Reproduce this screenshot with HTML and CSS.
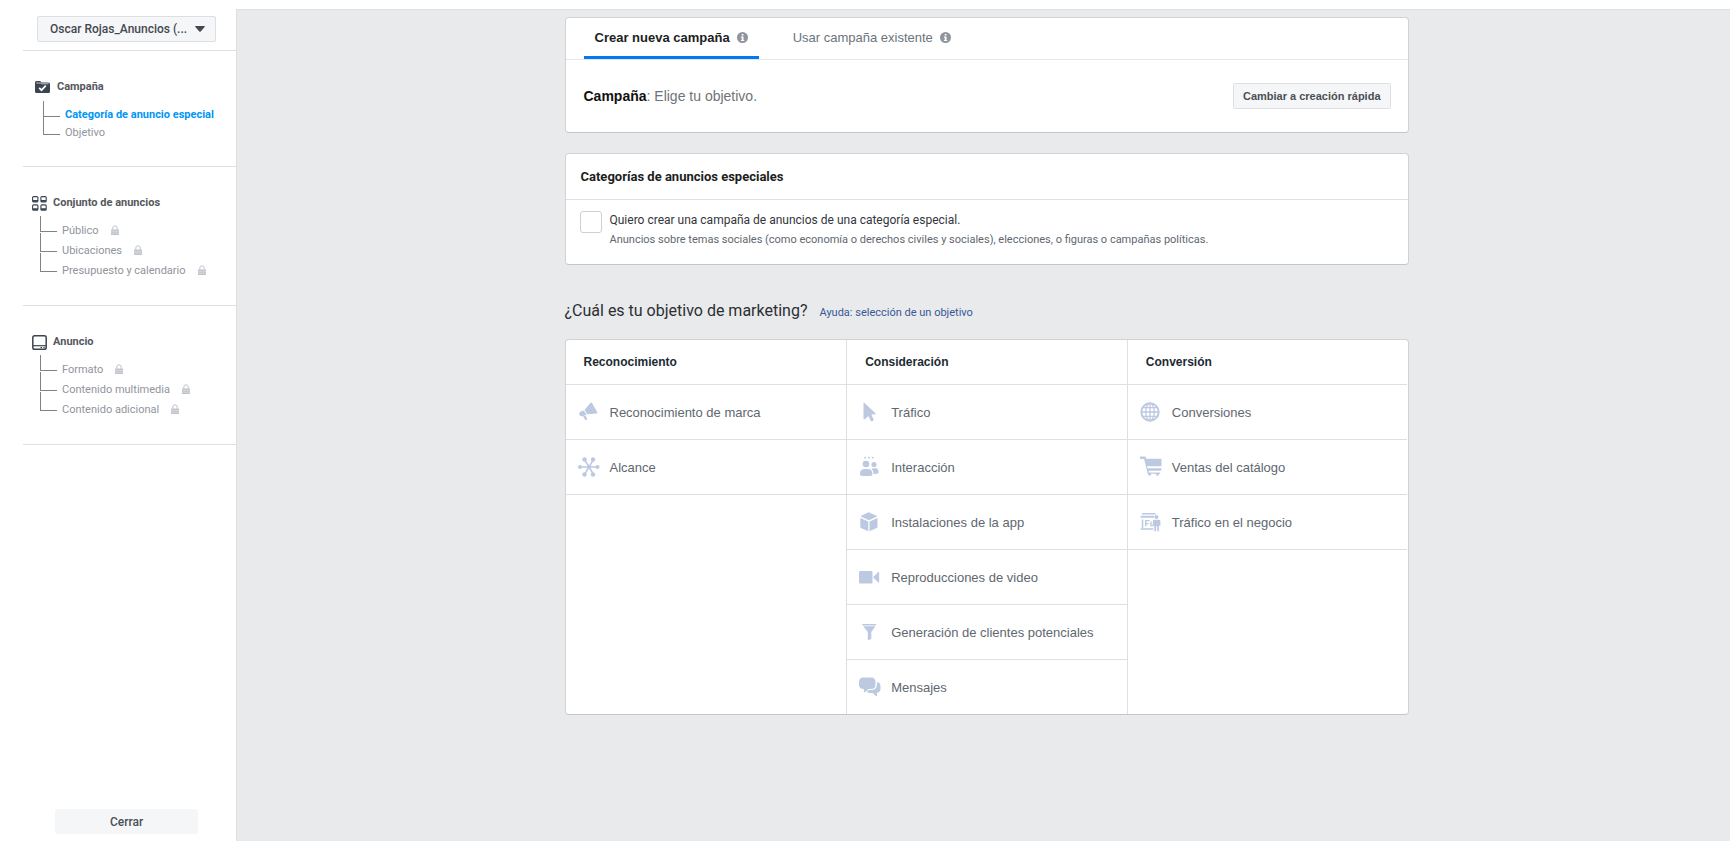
FILE: index.html
```
<!DOCTYPE html>
<html lang="es">
<head>
<meta charset="utf-8">
<title>Crear campaña</title>
<link rel="stylesheet" href="styles.css">
</head>
<body>
<svg class="sprite" aria-hidden="true">
  <symbol id="lock" viewBox="0 0 8 10"><path d="M1.800 4.500V3a2.200 2.200 0 0 1 4.400 0v1.500" fill="none" stroke="currentColor"/><path d="M0 4.500h8V10H0z" fill="currentColor"/><path d="M0 6.300h8M0 8.200h8" stroke="#fff" stroke-width=".4"/></symbol>
  <symbol id="info" viewBox="0 0 11 11"><circle cx="5.500" cy="5.500" r="5.500" fill="currentColor"/><path d="M4.700 1.900h1.800v1.500H4.700zM4 4.500h2.500v3.400h.8v1.100H3.900V7.900h.8V5.600H4z" fill="#fff"/></symbol>
</svg>
<div class="app">
  <nav class="sidebar" aria-label="Pasos">
    <div class="account">
      <select class="account-select" aria-label="Cuenta publicitaria"><option>Oscar Rojas_Anuncios (...</option></select>
      <svg class="caret" viewBox="0 0 10 6"><path d="M.7 0h8.600q.9 0 .3.900L5.700 5.500q-.7.700-1.400 0L.4.900Q-.2 0 .7 0z" fill="currentColor"/></svg>
    </div>
    <section class="step step-campaign">
      <h2 class="step-title"><svg class="step-icon" viewBox="0 0 15 15"><path d="M1.500 1h3.700l1.300 1.500h7q1.500 0 1.500 1.500v7.500Q15 13 13.500 13h-12Q0 13 0 11.500v-9Q0 1 1.500 1z" fill="#3b4450"/><path d="M1.300 3h4.500l.8.800h7" fill="none" stroke="#fff" stroke-width=".7"/><path d="M4.200 7.900l2.300 2.300 4.300-4.600" fill="none" stroke="#fff" stroke-width="1.700"/></svg>Campaña</h2>
      <ul class="tree">
        <li><a class="tree-link active" href="#especial">Categoría de anuncio especial</a></li>
        <li><a class="tree-link" href="#objetivo">Objetivo</a></li>
      </ul>
    </section>
    <section class="step">
      <h2 class="step-title"><svg class="step-icon" viewBox="0 0 15 15"><g fill="none" stroke="#3b4450" stroke-width="1.100"><rect x=".6" y=".6" width="5.300" height="5.300" rx="1"/><rect x="8.900" y=".6" width="5.300" height="5.300" rx="1"/><rect x=".6" y="8.900" width="5.300" height="5.300" rx="1"/><rect x="8.900" y="8.900" width="5.300" height="5.300" rx="1"/></g><path d="M1 4h5v1.800H1zM9 4h5v1.800H9zM1 12.300h5v1.800H1zM9 12.300h5v1.800H9z" fill="#3b4450"/></svg>Conjunto de anuncios</h2>
      <ul class="tree">
        <li><span>Público</span><svg class="lock"><use href="#lock"/></svg></li>
        <li><span>Ubicaciones</span><svg class="lock"><use href="#lock"/></svg></li>
        <li><span>Presupuesto y calendario</span><svg class="lock"><use href="#lock"/></svg></li>
      </ul>
    </section>
    <section class="step">
      <h2 class="step-title"><svg class="step-icon" viewBox="0 0 15 15"><rect x=".8" y=".8" width="13.400" height="13.400" rx="1.800" fill="none" stroke="#3b4450" stroke-width="1.500"/><path d="M1 10.700h13" stroke="#3b4450" stroke-width="1.200"/><path d="M8.500 12.500h1.500M11.300 12.500h1.400" stroke="#3b4450" stroke-width="1.200"/></svg>Anuncio</h2>
      <ul class="tree">
        <li><span>Formato</span><svg class="lock"><use href="#lock"/></svg></li>
        <li><span>Contenido multimedia</span><svg class="lock"><use href="#lock"/></svg></li>
        <li><span>Contenido adicional</span><svg class="lock"><use href="#lock"/></svg></li>
      </ul>
    </section>
    <button class="close" type="button">Cerrar</button>
  </nav>

  <main class="main">
    <div class="content">
      <section class="card">
        <div class="tabs" role="tablist">
          <button class="tab selected" type="button" role="tab" aria-selected="true">Crear nueva campaña<svg class="info"><use href="#info"/></svg></button>
          <button class="tab" type="button" role="tab" aria-selected="false">Usar campaña existente<svg class="info"><use href="#info"/></svg></button>
        </div>
        <div class="campaign">
          <p class="campaign-text"><strong>Campaña</strong>: Elige tu objetivo.</p>
          <button class="quick" type="button">Cambiar a creación rápida</button>
        </div>
      </section>

      <section class="card" id="especial">
        <h2 class="card-title">Categorías de anuncios especiales</h2>
        <div class="special">
          <input class="check" type="checkbox" id="special-check" aria-describedby="special-hint">
          <div>
            <label class="special-label" for="special-check">Quiero crear una campaña de anuncios de una categoría especial.</label>
            <p class="special-hint" id="special-hint">Anuncios sobre temas sociales (como economía o derechos civiles y sociales), elecciones, o figuras o campañas políticas.</p>
          </div>
        </div>
      </section>

      <div class="question" id="objetivo">
        <h1 class="question-title">¿Cuál es tu objetivo de marketing?</h1>
        <a class="help" href="#ayuda">Ayuda: selección de un objetivo</a>
      </div>

      <div class="card objectives">
        <section class="column">
          <h3 class="column-title">Reconocimiento</h3>
          <button class="objective" type="button"><svg class="icon" viewBox="0 0 22 22"><path d="M12.600 1.800q.9-.9 1.500.2l5.200 9.200q.4 1.200-.8 1.200L9.300 13.200 6.500 8.900z"/><path d="M5.700 9.400l2.900 4.400-2.800.9Q3 16 1.600 14 .5 11.500 2.800 10.500z"/><path d="M5 15.600l2.500-1 1.600 3.200q.2.900-.6 1.200-.9.300-1.500-.5z"/></svg>Reconocimiento de marca</button>
          <button class="objective" type="button"><svg class="icon" viewBox="0 0 22 22"><path d="M2 11h18M6.500 3.500l9 15M15.500 3.500l-9 15" stroke="currentColor" stroke-width="1.500"/><circle cx="2" cy="11" r="2"/><circle cx="19.500" cy="11" r="2"/><circle cx="6.500" cy="3.500" r="2.200"/><circle cx="15" cy="3.500" r="2.200"/><circle cx="6.500" cy="18.500" r="2.200"/><circle cx="15" cy="18.500" r="2.200"/><circle cx="11" cy="11" r="2"/></svg>Alcance</button>
        </section>
        <section class="column">
          <h3 class="column-title">Consideración</h3>
          <button class="objective" type="button"><svg class="icon" viewBox="0 0 22 22"><path d="M4.500 2.300q0-1.200 1-.4l11 10.400q.8.900-.4.900l-3.800.3 2.300 5q.3.900-.5 1.300l-1.100.5q-.9.300-1.300-.6L9.500 14.900l-4 3.400q-1 .6-1-.5z"/></svg>Tráfico</button>
          <button class="objective" type="button"><svg class="icon" viewBox="0 0 22 22"><circle cx="6.200" cy="1.700" r=".9"/><circle cx="10" cy="1.700" r=".9"/><circle cx="13.800" cy="1.700" r=".9"/><circle cx="7" cy="8" r="3.300"/><circle cx="15" cy="8.500" r="2.600"/><path d="M1 18q0-5 4.800-5h2.800q4.800 0 4.800 5v.5q0 1.500-4.500 1.500H5.500Q1 20 1 18.500z"/><path d="M12.300 12.800q1-.5 2.500-.5h1.500q3.300 0 3.300 4 0 1.800-5 1.600-.1-3.500-2.300-5.100z"/></svg>Interacción</button>
          <button class="objective" type="button"><svg class="icon" viewBox="0 0 22 22"><path d="M9.600 1.300l7.900 3.400q.8.500 0 1L10 9.300 2.200 5.700q-.8-.5 0-1z"/><path d="M1.300 6.900l8 3.600v9.800L2 17q-.7-.4-.7-1.200zM18.500 6.900l-8 3.600v9.800l7.300-3.300q.7-.4.7-1.200z"/></svg>Instalaciones de la app</button>
          <button class="objective" type="button"><svg class="icon" viewBox="0 0 22 22"><rect x="0" y="5" width="13.500" height="12.500" rx="1.200"/><path d="M14 11.200l5.300-5.300q.8-.5.800.5v9.800q0 1-.8.400z"/></svg>Reproducciones de video</button>
          <button class="objective" type="button"><svg class="icon" viewBox="0 0 22 22"><path d="M3 3h14.500l-.8 1.400H3.800zM4.200 5.300h12.200L12.300 11v6.200q0 .5-.5.800l-2 1q-1 .3-1-.6V11z"/></svg>Generación de clientes potenciales</button>
          <button class="objective" type="button"><svg class="icon" viewBox="0 0 22 22"><path d="M4.500 1.500h7.500q4.500 0 4.500 4.500v2.500q0 4.500-4.500 4.500H9.500q-1.700 2.700-4 3.300-.9 0-.6-.9V13Q0 13 0 8.500V6q0-4.500 4.500-4.500z"/><path d="M18 6q3.500.7 3.500 4v2.500q0 3.700-3.500 4.300v2.500q-.1 1.300-1.200.6l-3.100-2.800H11q-2.400 0-3.200-1.700 1.500-.5 2.300-1.400H12q6 0 6-6z"/></svg>Mensajes</button>
        </section>
        <section class="column">
          <h3 class="column-title">Conversión</h3>
          <button class="objective" type="button"><svg class="icon" viewBox="0 0 22 22"><g fill="none" stroke="currentColor" stroke-width="1.300"><circle cx="10" cy="11" r="8.700" stroke-width="2"/><ellipse cx="10" cy="11" rx="4.300" ry="8.700"/><path d="M10 2v18M1.500 11h17M2.500 6.700h15M2.500 15.300h15"/></g></svg>Conversiones</button>
          <button class="objective" type="button"><svg class="icon" viewBox="0 0 22 22"><path d="M0 .5h4.800q.7 0 .9.800l.5 1.500H21.500v7.500H7l.4 2h14v1.500q0 1-1 1H8.600l.3 1.700h10.500q1 0 1 1.300h-1.200q-.2 1.900-1.700 1.900t-1.700-1.900h-4.500q-.2 1.900-1.700 1.900t-1.900-2.200L4.100 3H.9Q0 3 0 2z"/></svg>Ventas del catálogo</button>
          <button class="objective" type="button"><svg class="icon" viewBox="0 0 22 22"><path d="M2.500 2h12.800l.8 1.500H1.700zM1.200 4.800h13.200v1.900H.2zM1.800 8.500h1.500V17H1.800zM.5 17.300h12.700v1.500H.5zM5 9h4.700v1.300H6.400v1.700h2.400v1.200H6.400v2H5zM10.300 10.500h1.400v3.500h1.800v1.300h-3.200z"/><circle cx="16.500" cy="6" r="1.900"/><path d="M14 8.700h5q1.400 0 1.400 1.500v4.600h-1.500v5.400h-1.700v-5h-1.200v5h-1.700v-5.400h-1.500v-4.600q0-1.500 1.200-1.500z"/></svg>Tráfico en el negocio</button>
        </section>
      </div>
    </div>
  </main>
</div>
</body>
</html>
```
FILE: styles.css
```
* { box-sizing: border-box; }
body { margin: 0; background: #fff; font-family: "Liberation Sans", Arial, sans-serif; }
h1, h2, h3, p, ul { margin: 0; padding: 0; }
ul { list-style: none; }
button { font-family: inherit; margin: 0; cursor: pointer; }
a { text-decoration: none; }
.sprite { display: none; }

.app { display: flex; min-height: 100vh; padding: 9px 0 18px; }

/* Sidebar */
.sidebar { display: flex; flex-direction: column; flex: none; width: 213px; margin-left: 23px; font-family: Roboto, sans-serif; }
.account { display: grid; align-items: center; padding: 7px 20px 8px 14px; border-bottom: 1px solid #dddfe2; color: #444950; }
.account-select { grid-area: 1 / 1; appearance: none; width: 100%; height: 26px; padding: 0 26px 0 12px; border: 1px solid #dddfe2; border-radius: 2px; background: #f5f6f7; color: inherit; font: 500 12px Roboto, sans-serif; }
.caret { grid-area: 1 / 1; justify-self: end; width: 10px; height: 6px; margin-right: 11px; pointer-events: none; }
.step { padding: 26px 0 24px 9px; border-bottom: 1px solid #dddfe2; }
.step-campaign { padding-left: 12px; }
.step-title { display: flex; align-items: center; gap: 6px; margin-bottom: 8px; color: #55585e; font-size: 11px; font-weight: 700; line-height: 20px; }
.step-campaign .step-title { gap: 7px; padding-bottom: 1px; }
.step-icon { width: 15px; height: 15px; }
.tree { padding-left: 8px; color: #90949c; font-size: 11px; line-height: 20px; }
.tree li { display: flex; align-items: flex-start; height: 20px; }
.tree li::before { content: ""; width: 16px; height: 18px; margin: -8px 5px 0 0; border: solid #7f8388; border-width: 0 0 1px 1px; }
.tree li:first-child::before { height: 15px; margin-top: -5px; }
.step-campaign .tree { line-height: 18px; }
.step-campaign .tree li { height: 18px; }
.tree-link { color: inherit; }
.tree-link.active { color: #0095f6; font-weight: 700; }
.lock { width: 8px; height: 10px; margin: 4px 0 0 12px; color: #bec3c9; }
.close { height: 25px; margin: auto 38px 7px 32px; border: 0; border-radius: 3px; background: #f5f6f7; color: #4b4f56; font-size: 12px; font-weight: 500; }

/* Main area */
.main { flex: 1; min-width: 0; padding: 7px 0 20px 6px; border: solid #dddfe2; border-width: 1px 0 0 1px; background: #e9eaec; }
.content { max-width: 844px; margin: 0 auto; }
.card { margin-bottom: 20px; border: 1px solid #d0d2d5; border-bottom-color: #c4c6ca; border-radius: 4px; background: #fff; overflow: hidden; }

.tabs { display: flex; gap: 23px; padding: 0 18px; border-bottom: 1px solid #e4e6e9; }
.tab { display: flex; align-items: center; gap: 7px; height: 41px; padding: 0 11px; border: 0; border-bottom: 3px solid transparent; background: none; color: #6b737c; font-size: 13px; }
.tab.selected { border-bottom-color: #0378f4; color: #1c1e21; font-weight: 700; }
.info { width: 11px; height: 11px; color: #90949c; }
.campaign { display: flex; align-items: center; justify-content: space-between; padding: 23px 17px 23px 18px; }
.campaign-text { color: #6f7378; font-size: 14px; }
.campaign-text strong { color: #111; }
.quick { height: 26px; padding: 0 9px; border: 1px solid #dddfe2; border-radius: 2px; background: #f5f6f7; color: #4b4f56; font-size: 11px; font-weight: 700; }

.card-title { padding: 0 15px; border-bottom: 1px solid #dddfe2; color: #1c1e21; font: 700 13px/45px Roboto, sans-serif; }
.special { display: flex; gap: 8px; padding: 11px 14px 15px; font-family: Roboto, sans-serif; line-height: 19px; }
.check { appearance: none; flex: none; width: 22px; height: 22px; margin: 0; border: 1px solid #ccd0d5; border-radius: 3px; background: #fff; }
.special-label { display: block; color: #33363b; font-size: 12px; }
.special-hint { color: #606770; font-size: 11px; }

.question { display: flex; align-items: baseline; gap: 12px; margin: 34px 0 14px; font-family: Roboto, sans-serif; line-height: 24px; }
.question-title { color: #2c2f33; font-size: 16px; font-weight: 400; }
.help { color: #385898; font-size: 11px; }

/* Objectives */
.objectives { display: grid; grid-template-columns: repeat(3, 1fr); }
.column + .column { border-left: 1px solid #dddfe2; }
.column-title { padding-left: 18px; border-bottom: 1px solid #dddfe2; color: #1c2b33; font-size: 12px; line-height: 44px; }
.objective { display: flex; align-items: center; gap: 10px; width: 100%; height: 55px; padding: 0 12px; border: 0; border-bottom: 1px solid #dddfe2; background: none; color: #606770; font-size: 13px; text-align: left; }
.column .objective:nth-child(7) { height: 54px; border-bottom: 0; }
.icon { flex: none; width: 22px; height: 22px; color: #bdc9e1; fill: currentColor; }
```
